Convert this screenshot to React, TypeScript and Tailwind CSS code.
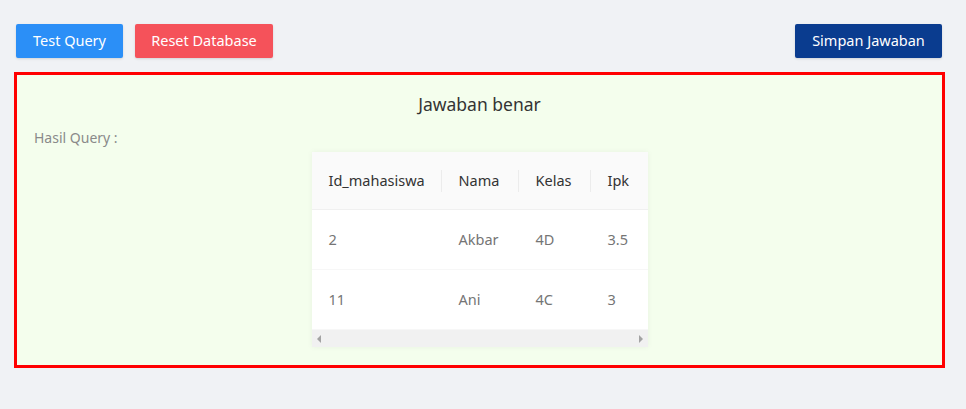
import React from "react";

const font = { fontFamily: '"Noto Sans", "Open Sans", sans-serif' };

export default function App() {
  const rows = [
    ["2", "Akbar", "4D", "3.5"],
    ["11", "Ani", "4C", "3"],
  ];
  const widths = ["w-[130px]", "w-[77px]", "w-[72px]", "w-[141px]"];
  return (
    <div className="w-[966px] h-[409px] bg-[#f0f2f5] pl-[14px] pr-[21px] pt-[24px]" style={font}>
      <div className="flex items-center pl-[2px] pr-[3px]">
        <button className="h-[34px] w-[107px] bg-[#2b8ff7] text-white text-[14.5px] rounded-[2px] shadow-sm">
          Test Query
        </button>
        <button className="ml-[12px] h-[34px] w-[138px] bg-[#f5525a] text-white text-[14.5px] rounded-[2px] shadow-sm">
          Reset Database
        </button>
        <button className="ml-auto h-[34px] w-[147px] bg-[#0a3c8f] text-white text-[14.5px] rounded-[2px] shadow-sm">
          Simpan Jawaban
        </button>
      </div>
      <div className="mt-[14px] h-[296px] border-[3px] border-[#ff0000] bg-[#f4feed] px-[17px] pt-[16px]">
        <div className="text-center text-[17.5px] text-[#333] leading-[26px]">Jawaban benar</div>
        <div className="mt-[11px] text-[14px] text-[#8a8a8a] leading-[20px]">Hasil Query :</div>
        <div className="flex justify-center mt-[4px]">
          <div className="w-[336px] overflow-hidden bg-white shadow-[0_0_6px_rgba(0,0,0,0.05)]">
            <div className="w-[420px]">
              <div className="flex h-[58px] bg-[#fafafa] border-b border-[#f0f0f0] text-[14.5px] text-[#333]">
                {["Id_mahasiswa", "Nama", "Kelas", "Ipk"].map((t, i) => (
                  <div key={i} className={`${widths[i]} relative flex items-center pl-[17px]`}>
                    {t}
                    {i < 3 && (
                      <span className="absolute right-0 top-1/2 -translate-y-1/2 h-[22px] w-px bg-[#ececec]" />
                    )}
                  </div>
                ))}
              </div>
              {rows.map((r, ri) => (
                <div key={ri} className="flex h-[60px] text-[14.5px] text-[#757575] border-b border-[#f7f7f7]">
                  {r.map((c, ci) => (
                    <div key={ci} className={`${widths[ci]} flex items-center pl-[17px]`}>
                      {c}
                    </div>
                  ))}
                </div>
              ))}
            </div>
            <div className="h-[17px] bg-[#f1f1f1] flex items-center justify-between px-[4px]">
              <svg width="6" height="8" viewBox="0 0 6 8">
                <path d="M5 0 L1 4 L5 8 Z" fill="#a3a3a3" />
              </svg>
              <svg width="6" height="8" viewBox="0 0 6 8">
                <path d="M1 0 L5 4 L1 8 Z" fill="#a3a3a3" />
              </svg>
            </div>
          </div>
        </div>
      </div>
    </div>
  );
}
